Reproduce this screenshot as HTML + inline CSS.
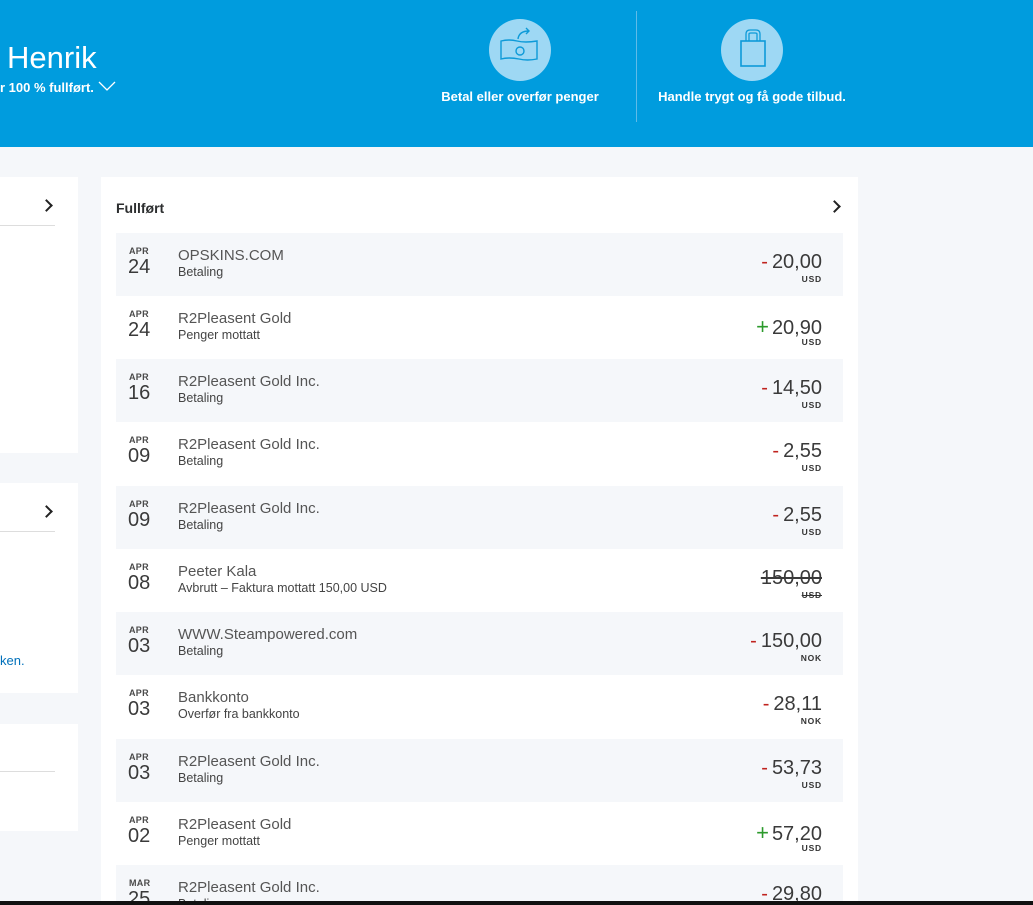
<!DOCTYPE html>
<html><head><meta charset="utf-8"><style>
*{margin:0;padding:0;box-sizing:border-box}
html{width:1033px;height:905px;overflow:hidden}
body{width:1033px;height:905px;overflow:hidden;background:#f5f7fa;font-family:"Liberation Sans",Arial,sans-serif;position:relative;color:#2c2e2f}
.hdr{position:absolute;left:0;top:0;width:1033px;height:147px;background:#009cde}
.abs{position:absolute}
.card{position:absolute;background:#fff;overflow:hidden}
.row{position:absolute;left:116px;width:727px;height:63px;overflow:hidden}
.row.g{background:#f5f7fa}
.mon{position:absolute;left:13px;top:13px;font-size:9px;font-weight:bold;color:#4a4a4a;letter-spacing:.3px}
.day{position:absolute;left:12px;top:23px;font-size:20px;color:#3a3a3a}
.nm{position:absolute;left:62px;top:14px;font-size:15px;color:#555}
.sub{position:absolute;left:62px;top:32px;font-size:12.5px;color:#444}
.amt{position:absolute;right:21px;top:18px;font-size:20px;color:#3a3a3a;white-space:nowrap}
.cur{position:absolute;right:21px;top:41px;font-size:8.5px;font-weight:bold;color:#333;letter-spacing:.8px}
.m{color:#c0231e;font-size:20px;margin-right:4px}
.p{color:#2c9a2c;font-size:22px;margin-right:3px}
.chev{position:absolute;width:9px;height:9px;border-top:2px solid #222;border-right:2px solid #222;transform:rotate(45deg)}
</style></head><body>
<div class="hdr">
  <div class="abs" style="left:7px;top:40px;font-size:31px;color:#fff">Henrik</div>
  <div class="abs" style="left:0;top:80px;font-size:13px;font-weight:bold;color:#fff">r 100 % fullført.</div>
  <svg class="abs" style="left:98px;top:80px" width="18" height="12"><path d="M1 2 L9 10 L17 2" stroke="#fff" stroke-width="1.3" fill="none"/></svg>
  <div class="abs" style="left:489px;top:19px;width:62px;height:62px;border-radius:50%;background:#9ed8f4"></div>
  <svg class="abs" style="left:489px;top:19px" width="62" height="62"><path d="M12 22 Q20 20 28 22 Q36 24 48 22 L48 40 Q38 42 30 40 Q20 38 12 40 Z" stroke="#0d9ad8" stroke-width="1.4" fill="none"/><circle cx="31" cy="32" r="4" stroke="#0d9ad8" stroke-width="1.4" fill="none"/><path d="M29 20 Q30 12 40 12 M37 9 L40 12 L37 15" stroke="#0d9ad8" stroke-width="1.4" fill="none"/></svg>
  <div class="abs" style="left:420px;top:89px;width:200px;text-align:center;font-size:13px;font-weight:bold;color:#fff">Betal eller overfør penger</div>
  <div class="abs" style="left:636px;top:11px;width:1px;height:111px;background:#5fbbe8"></div>
  <div class="abs" style="left:721px;top:19px;width:62px;height:62px;border-radius:50%;background:#9ed8f4"></div>
  <svg class="abs" style="left:721px;top:19px" width="62" height="62"><rect x="20" y="22" width="24" height="25" stroke="#0d9ad8" stroke-width="1.6" fill="none"/><path d="M25 22 L25 15 Q25 11 29 11 L35 11 Q39 11 39 15 L39 22 M28 22 L28 15 Q28 14 30 14 L34 14 Q36 14 36 15 L36 22" stroke="#0d9ad8" stroke-width="1.3" fill="none"/></svg>
  <div class="abs" style="left:642px;top:89px;width:220px;text-align:center;font-size:13px;font-weight:bold;color:#fff">Handle trygt og få gode tilbud.</div>
</div>

<div class="card" style="left:0;top:177px;width:78px;height:276px"><div class="abs" style="left:0;top:48px;width:55px;height:1px;background:#ddd"></div></div>
<div class="chev" style="left:42px;top:201px"></div>
<div class="card" style="left:0;top:483px;width:78px;height:210px"><div class="abs" style="left:0;top:48px;width:55px;height:1px;background:#ddd"></div><div class="abs" style="left:0;top:170px;font-size:13px;color:#0070ba">ken.</div></div>
<div class="chev" style="left:42px;top:507px"></div>
<div class="card" style="left:0;top:724px;width:78px;height:107px"><div class="abs" style="left:0;top:47px;width:55px;height:1px;background:#ddd"></div></div>

<div class="card" style="left:101px;top:177px;width:757px;height:728px">
  <div class="abs" style="left:15px;top:23px;font-size:14px;font-weight:bold;color:#2c2e2f">Fullført</div>
  <div class="chev" style="left:729px;top:25px"></div>
</div>

<div class="row g" style="top:233px"><div class="mon">APR</div><div class="day">24</div><div class="nm">OPSKINS.COM</div><div class="sub">Betaling</div><div class="amt"><span class="m">-</span>20,00</div><div class="cur">USD</div></div>
<div class="row" style="top:296px"><div class="mon">APR</div><div class="day">24</div><div class="nm">R2Pleasent Gold</div><div class="sub">Penger mottatt</div><div class="amt"><span class="p">+</span>20,90</div><div class="cur">USD</div></div>
<div class="row g" style="top:359px"><div class="mon">APR</div><div class="day">16</div><div class="nm">R2Pleasent Gold Inc.</div><div class="sub">Betaling</div><div class="amt"><span class="m">-</span>14,50</div><div class="cur">USD</div></div>
<div class="row" style="top:422px"><div class="mon">APR</div><div class="day">09</div><div class="nm">R2Pleasent Gold Inc.</div><div class="sub">Betaling</div><div class="amt"><span class="m">-</span>2,55</div><div class="cur">USD</div></div>
<div class="row g" style="top:486px"><div class="mon">APR</div><div class="day">09</div><div class="nm">R2Pleasent Gold Inc.</div><div class="sub">Betaling</div><div class="amt"><span class="m">-</span>2,55</div><div class="cur">USD</div></div>
<div class="row" style="top:549px"><div class="mon">APR</div><div class="day">08</div><div class="nm">Peeter Kala</div><div class="sub">Avbrutt – Faktura mottatt 150,00 USD</div><div class="amt" style="text-decoration:line-through">150,00</div><div class="cur" style="text-decoration:line-through">USD</div></div>
<div class="row g" style="top:612px"><div class="mon">APR</div><div class="day">03</div><div class="nm">WWW.Steampowered.com</div><div class="sub">Betaling</div><div class="amt"><span class="m">-</span>150,00</div><div class="cur">NOK</div></div>
<div class="row" style="top:675px"><div class="mon">APR</div><div class="day">03</div><div class="nm">Bankkonto</div><div class="sub">Overfør fra bankkonto</div><div class="amt"><span class="m">-</span>28,11</div><div class="cur">NOK</div></div>
<div class="row g" style="top:739px"><div class="mon">APR</div><div class="day">03</div><div class="nm">R2Pleasent Gold Inc.</div><div class="sub">Betaling</div><div class="amt"><span class="m">-</span>53,73</div><div class="cur">USD</div></div>
<div class="row" style="top:802px"><div class="mon">APR</div><div class="day">02</div><div class="nm">R2Pleasent Gold</div><div class="sub">Penger mottatt</div><div class="amt"><span class="p">+</span>57,20</div><div class="cur">USD</div></div>
<div class="row g" style="top:865px;height:36px"><div class="mon">MAR</div><div class="day">25</div><div class="nm">R2Pleasent Gold Inc.</div><div class="sub">Betaling</div><div class="amt"><span class="m">-</span>29,80</div></div>

<div class="abs" style="left:0;top:901px;width:1033px;height:4px;background:#111"></div>
</body></html>
